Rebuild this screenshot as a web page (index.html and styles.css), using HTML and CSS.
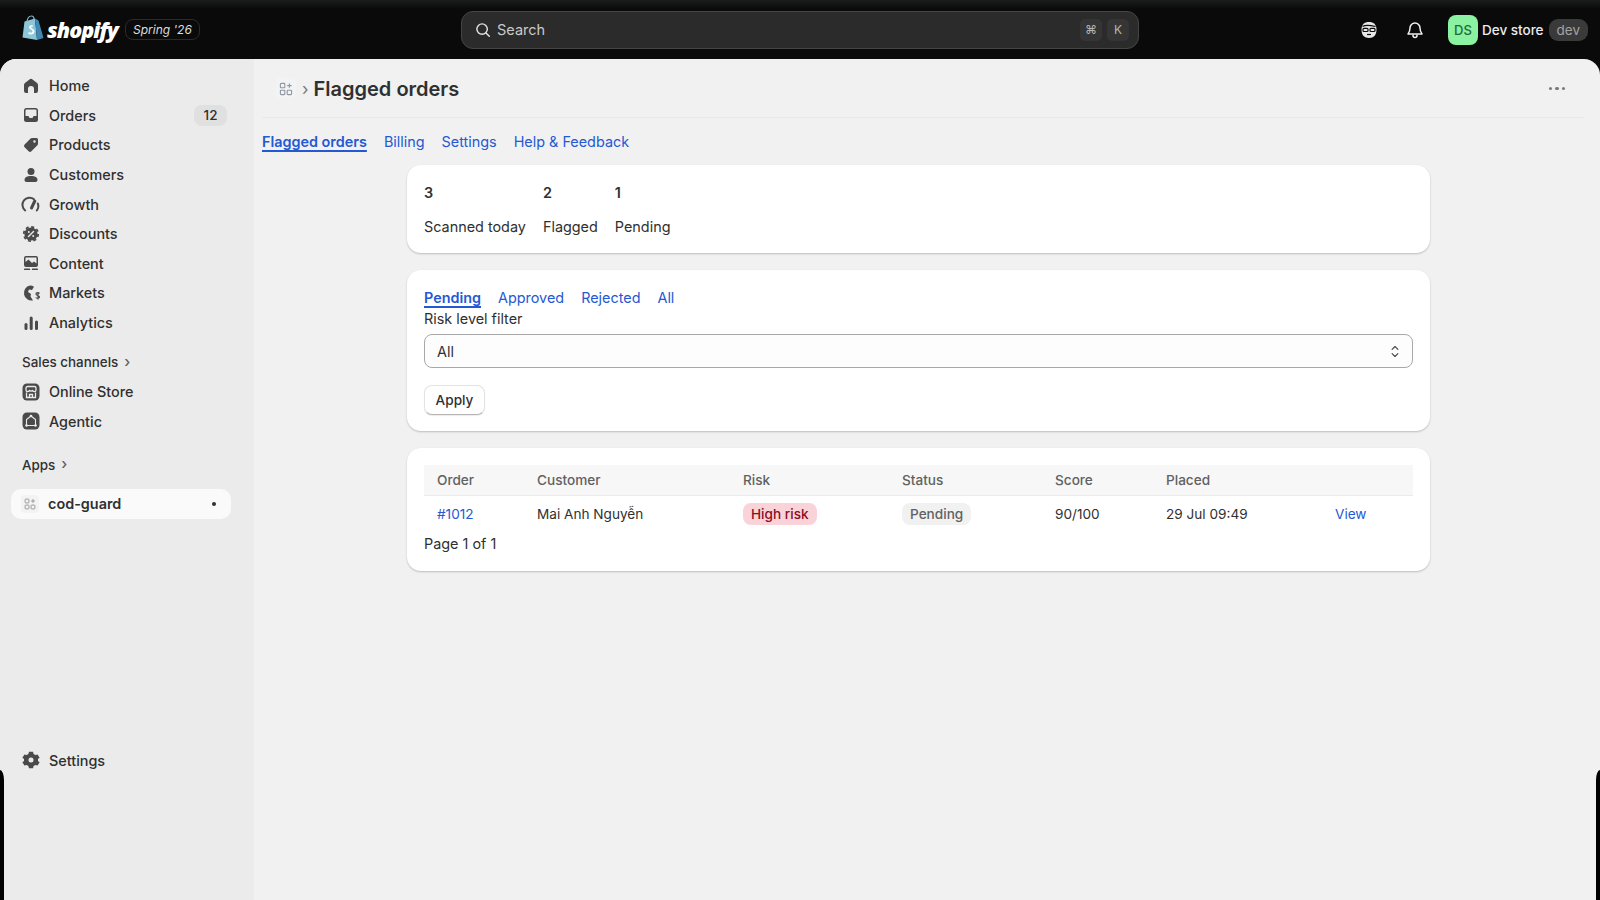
FILE: index.html
```html
<!DOCTYPE html>
<html>
<head>
    <title>Flagged orders</title>
    <link rel="stylesheet" href="styles.css">
</head>
<body>
    <header class="topbar">
        <div class="brand">
            <svg class="bag" viewBox="0 0 22 26" width="22" height="26">
                <path d="M2.5 6.5 L13 3.5 L15 25 L0.5 22.5 Z" fill="#8dc6d8"/>
                <path d="M13 3.5 L16.5 5.5 L21.5 23 L15 25 Z" fill="#3f8ab5"/>
                <path d="M5 6.5C5.5 3 7.5 1 9.5 1s2.5 1.500 2.500 3.500" fill="none" stroke="#7fb6cc" stroke-width="1.200"/>
                <path d="M10.800 10.500c-1-.5-3.600-.4-3.700 1.700-.1 2 3.600 2.300 3.400 4.300-.1 1.300-1.900 1.500-3.700.6l-.5 1.800c2.600 1 5.900.6 6.200-2.300.2-2.700-3.500-3-3.400-4.400 0-.6 1-.8 2-.4z" fill="#fff"/>
            </svg>
            <span class="wordmark">shopify</span>
            <span class="edition">Spring '26</span>
        </div>
        <div class="search">
            <svg viewBox="0 0 20 20" width="18" height="18" fill="none" stroke="#e3e3e3" stroke-width="1.600" stroke-linecap="round">
                <circle cx="9" cy="9" r="5.800"/>
                <path d="M13.300 13.300 L17 17"/>
            </svg>
            <span class="search-text">Search</span>
            <kbd>⌘</kbd>
            <kbd>K</kbd>
        </div>
        <div class="top-right">
            <svg class="top-icon" viewBox="0 0 20 20" width="20" height="20">
                <path d="M10 2c4.600 0 7.500 2.400 7.500 7.500 0 5.800-2.900 8.500-7.500 8.500s-7.500-2.700-7.500-8.500C2.500 4.400 5.400 2 10 2z" fill="#e8e8e8"/>
                <path d="M3.500 6.500c3-2 9-1 13 0" fill="none" stroke="#0b0b0b" stroke-width="1.200"/>
                <rect x="4" y="8.300" width="5" height="3.200" rx="1" fill="none" stroke="#0b0b0b" stroke-width="1.200"/>
                <rect x="11" y="8.300" width="5" height="3.200" rx="1" fill="none" stroke="#0b0b0b" stroke-width="1.200"/>
                <path d="M8 14.500h4" stroke="#0b0b0b" stroke-width="1.200"/>
            </svg>
            <svg class="top-icon bell" viewBox="0 0 20 20" width="20" height="20" fill="none" stroke="#f0f0f0" stroke-width="1.500" stroke-linejoin="round">
                <path d="M10 3a5 5 0 0 0-5 5c0 3-.8 4.500-2 6h14c-1.200-1.500-2-3-2-6a5 5 0 0 0-5-5z"/>
                <path d="M8 14.500v1a2 2 0 0 0 4 0v-1"/>
            </svg>
            <span class="avatar">DS</span>
            <span class="store-name">Dev store</span>
            <span class="dev-pill">dev</span>
        </div>
    </header>

    <div class="frame">
        <nav class="sidebar">
            <a class="nav-item">
                <svg class="icon" viewBox="0 0 20 20"><path d="M8.800 3.200a2 2 0 0 1 2.400 0l4.900 3.900c.6.500.9 1.200.9 1.900V15a2 2 0 0 1-2 2H13v-4a3 3 0 0 0-6 0v4H5a2 2 0 0 1-2-2V9c0-.7.300-1.400.9-1.900z"/></svg>
                <span>Home</span>
            </a>
            <a class="nav-item">
                <svg class="icon" viewBox="0 0 20 20"><path fill-rule="evenodd" d="M5.500 3h9A2.500 2.500 0 0 1 17 5.500v9a2.500 2.500 0 0 1-2.500 2.500h-9A2.500 2.500 0 0 1 3 14.500v-9A2.500 2.500 0 0 1 5.500 3zM4.500 5.500V11h3l1 2h3l1-2h3V5.500a1 1 0 0 0-1-1h-9a1 1 0 0 0-1 1z"/></svg>
                <span>Orders</span>
                <span class="count">12</span>
            </a>
            <a class="nav-item">
                <svg class="icon" viewBox="0 0 20 20"><path fill-rule="evenodd" d="M11.200 3h4.300A1.500 1.500 0 0 1 17 4.500v4.300a2 2 0 0 1-.6 1.400l-6 6a2 2 0 0 1-2.800 0l-4-4a2 2 0 0 1 0-2.800l6-6a2 2 0 0 1 1.600-.4zM13.500 5.300a1.200 1.200 0 1 0 0 2.400 1.200 1.200 0 0 0 0-2.400z"/></svg>
                <span>Products</span>
            </a>
            <a class="nav-item">
                <svg class="icon" viewBox="0 0 20 20"><circle cx="10" cy="6.500" r="3.500"/><path d="M3.500 14.800c0-2.400 2.600-3.800 6.500-3.800s6.500 1.400 6.500 3.800V15a2 2 0 0 1-2 2h-9a2 2 0 0 1-2-2z"/></svg>
                <span>Customers</span>
            </a>
            <a class="nav-item">
                <svg class="icon line" viewBox="0 0 20 20"><path d="M4.200 16.500A7 7 0 0 1 13 5.200"/><path d="M16.800 9.500a7 7 0 0 1-1 7"/><path d="M13.800 7 10.500 14" stroke-width="3"/></svg>
                <span>Growth</span>
            </a>
            <a class="nav-item">
                <svg class="icon" viewBox="0 0 20 20">
                    <circle cx="10" cy="10" r="6.600"/>
                    <circle cx="10" cy="10" r="7.200" fill="none" stroke="#4a4a4a" stroke-width="1.800" stroke-dasharray="3 2.650"/>
                    <path d="M12.500 7.500 7.500 12.500" stroke="#ebebeb" stroke-width="1.500" stroke-linecap="round"/>
                    <circle cx="7.800" cy="8" r="1" fill="#ebebeb"/>
                    <circle cx="12.200" cy="12" r="1" fill="#ebebeb"/>
                </svg>
                <span>Discounts</span>
            </a>
            <a class="nav-item">
                <svg class="icon" viewBox="0 0 20 20">
                    <path fill-rule="evenodd" d="M5 3h10a2 2 0 0 1 2 2v7a2 2 0 0 1-2 2H5a2 2 0 0 1-2-2V5a2 2 0 0 1 2-2zM4.500 5v4l3-2.500 3.500 3.500 2-1.500 2.500 2V5a.5.500 0 0 0-.5-.5H5a.5.500 0 0 0-.5.500z"/>
                    <rect x="3" y="15.600" width="6.200" height="1.500" rx=".7"/>
                    <rect x="10.800" y="15.600" width="6.200" height="1.500" rx=".7"/>
                </svg>
                <span>Content</span>
            </a>
            <a class="nav-item">
                <svg class="icon" viewBox="0 0 20 20">
                    <path d="M9 2.500a7.500 7.500 0 0 1 4 1.200L11 7 8 6.500 7 9l3 2-.5 2.500L12 17.400a7.500 7.500 0 1 1-3-14.900z"/>
                    <path d="M18.500 10.500c-.5-1-3.500-1.300-3.500.5 0 2 3.500 1 3.500 3 0 1.700-3 1.500-3.800.5M17 9v7.500" fill="none" stroke="#4a4a4a" stroke-width="1.200"/>
                </svg>
                <span>Markets</span>
            </a>
            <a class="nav-item">
                <svg class="icon" viewBox="0 0 20 20"><rect x="3.500" y="10" width="3" height="7" rx="1.500"/><rect x="8.700" y="3.500" width="3" height="13.500" rx="1.500"/><rect x="14" y="7.500" width="3" height="9.500" rx="1.500"/></svg>
                <span>Analytics</span>
            </a>

            <div class="nav-label">Sales channels <span class="chev">›</span></div>
            <a class="nav-item">
                <svg class="icon" viewBox="0 0 20 20">
                    <rect x="1.500" y="1.500" width="17" height="17" rx="4.500"/>
                    <path d="M5 8V6a1.500 1.500 0 0 1 1.500-1.500h7A1.500 1.500 0 0 1 15 6v2a1.700 1.700 0 0 1-3.400 0 1.700 1.700 0 0 1-3.200 0A1.700 1.700 0 0 1 5 8zM5.500 10.500V15.500h9v-5M8.500 15.500v-3h3v3" fill="none" stroke="#ebebeb" stroke-width="1.300"/>
                </svg>
                <span>Online Store</span>
            </a>
            <a class="nav-item">
                <svg class="icon" viewBox="0 0 20 20">
                    <rect x="1.500" y="1.500" width="17" height="17" rx="4.500"/>
                    <path d="M10 5 14.500 8.500 14.500 14.500 5.500 14.500 5.500 8.500Z" fill="none" stroke="#ebebeb" stroke-width="1.100"/>
                    <circle cx="10" cy="5" r="1.300" fill="#ebebeb"/>
                    <circle cx="5.500" cy="14.500" r="1.300" fill="#ebebeb"/>
                    <circle cx="14.500" cy="14.500" r="1.300" fill="#ebebeb"/>
                </svg>
                <span>Agentic</span>
            </a>

            <div class="nav-label apps">Apps <span class="chev">›</span></div>
            <a class="nav-item current">
                <span class="app-tile">
                    <svg viewBox="0 0 20 20" width="14" height="14" fill="none" stroke="#9b9b9b" stroke-width="1.400"><rect x="3" y="3" width="5.500" height="5.500" rx="1"/><rect x="3" y="11.500" width="5.500" height="5.500" rx="1"/><rect x="11.500" y="11.500" width="5.500" height="5.500" rx="1"/><path d="M14.250 3v5.500M11.500 5.750h5.500"/></svg>
                </span>
                <span>cod-guard</span>
                <i class="dot"></i>
            </a>

            <a class="nav-item settings">
                <svg class="icon" viewBox="0 0 20 20">
                    <path fill-rule="evenodd" d="M8 2.800h4l.6 2.200 1.800 1 2.200-.6 2 3.400-1.600 1.200v2l1.600 1.200-2 3.400-2.200-.6-1.800 1-.6 2.200H8l-.6-2.200-1.800-1-2.200.6-2-3.400L3 12v-2L1.400 8.800l2-3.400 2.200.6 1.800-1zM10 8.500a2.500 2.500 0 1 0 0 5 2.500 2.500 0 0 0 0-5z" transform="translate(0 -1)"/>
                </svg>
                <span>Settings</span>
            </a>
        </nav>

        <main class="content">
            <div class="page-head">
                <span class="app-tile head-tile">
                    <svg viewBox="0 0 20 20" width="16" height="16" fill="none" stroke="#8f979f" stroke-width="1.400"><rect x="3" y="3" width="5.500" height="5.500" rx="1"/><rect x="3" y="11.500" width="5.500" height="5.500" rx="1"/><rect x="11.500" y="11.500" width="5.500" height="5.500" rx="1"/><path d="M14.250 3v5.500M11.500 5.750h5.500"/></svg>
                </span>
                <span class="crumb-sep">›</span>
                <h1>Flagged orders</h1>
                <span class="more"><i></i><i></i><i></i></span>
            </div>
            <div class="tabs page-tabs">
                <a class="active">Flagged orders</a>
                <a>Billing</a>
                <a>Settings</a>
                <a>Help &amp; Feedback</a>
            </div>

            <div class="cards">
                <section class="card stats">
                    <div class="stat"><strong>3</strong><span>Scanned today</span></div>
                    <div class="stat"><strong>2</strong><span>Flagged</span></div>
                    <div class="stat"><strong>1</strong><span>Pending</span></div>
                </section>

                <section class="card filters">
                    <div class="tabs">
                        <a class="active">Pending</a>
                        <a>Approved</a>
                        <a>Rejected</a>
                        <a>All</a>
                    </div>
                    <label class="field-label">Risk level filter</label>
                    <div class="select">
                        <span>All</span>
                        <svg viewBox="0 0 12 18" width="10" height="15" fill="none" stroke="#4a4a4a" stroke-width="1.400" stroke-linecap="round" stroke-linejoin="round"><path d="M2.500 6.500 6 3l3.500 3.500M2.500 11.500 6 15l3.500-3.500"/></svg>
                    </div>
                    <button class="btn">Apply</button>
                </section>

                <section class="card orders">
                    <table>
                        <thead>
                            <tr>
                                <th>Order</th>
                                <th>Customer</th>
                                <th>Risk</th>
                                <th>Status</th>
                                <th>Score</th>
                                <th>Placed</th>
                                <th></th>
                            </tr>
                        </thead>
                        <tbody>
                            <tr>
                                <td><a>#1012</a></td>
                                <td>Mai Anh Nguyễn</td>
                                <td><span class="badge high">High risk</span></td>
                                <td><span class="badge">Pending</span></td>
                                <td>90/100</td>
                                <td>29 Jul 09:49</td>
                                <td><a>View</a></td>
                            </tr>
                        </tbody>
                    </table>
                    <p class="pager">Page 1 of 1</p>
                </section>
            </div>
        </main>
    </div>

    <div class="edge left"></div>
    <div class="edge right"></div>
</body>
</html>
```

FILE: styles.css
```css
* { box-sizing: border-box; }
body { margin: 0; height: 900px; overflow: hidden; position: relative; background: #0a0a0a; color: #303030; font-family: Inter, 'Noto Sans', sans-serif; font-size: 14px; }
a { color: #2459d3; }
i { display: block; }

/* top bar */
.topbar { height: 59px; display: grid; grid-template-columns: 461px 678px 1fr; align-items: center; background: linear-gradient(#1b1c1c, #0a0a0a 9px); color: #e3e3e3; }
.brand { display: flex; align-items: center; padding-left: 22px; }
.bag { margin-top: -3px; }
.wordmark { margin-left: 3px; width: 71px; color: #fff; font-family: 'Open Sans', sans-serif; font-size: 21.5px; font-weight: 800; font-style: italic; letter-spacing: -1px; }
.edition { margin-left: 7px; height: 21px; padding: 0 7px; display: flex; align-items: center; border: 1px solid #2b2b2b; border-radius: 8px; font-size: 12px; font-style: italic; color: #dedede; }
.search { height: 38px; display: flex; align-items: center; gap: 5px; padding: 0 9px 0 12px; background: #2b2b2b; border: 1px solid #454545; border-radius: 12px; }
.search-text { flex: 1; color: #c9c9c9; font-size: 14.500px; }
kbd { width: 22px; height: 22px; display: flex; align-items: center; justify-content: center; background: #353535; border-radius: 5px; color: #b5b5b5; font-family: Inter, sans-serif; font-size: 12px; }
.top-right { display: flex; align-items: center; padding-left: 220px; }
.top-icon { flex: none; }
.bell { margin-left: 26px; }
.avatar { margin-left: 23px; width: 30px; height: 30px; display: flex; align-items: center; justify-content: center; background: #8af2a1; border-radius: 8px; color: #1f6b3c; font-size: 13px; font-weight: 500; }
.store-name { margin-left: 4px; font-size: 13.500px; font-weight: 500; color: #ececec; }
.dev-pill { margin-left: 5px; padding: 0 8px; height: 22px; display: flex; align-items: center; background: #3a3a3a; border-radius: 9px; color: #a3a3a3; font-size: 13.500px; }

/* frame */
.frame { height: 841px; display: flex; background: #f1f1f1; border-radius: 16px 16px 0 0; overflow: hidden; }
.edge { position: absolute; top: 770px; bottom: 0; width: 4px; background: #000; }
.edge.left { left: 0; border-top-right-radius: 4px 10px; }
.edge.right { right: 0; border-top-left-radius: 4px 10px; }

/* sidebar */
.sidebar { width: 254px; flex: none; display: flex; flex-direction: column; padding: 12px 23px 125px 11px; background: #ebebeb; }
.nav-item { height: 29.600px; display: flex; align-items: center; padding: 0 4px 0 10px; color: #303030; font-size: 14.400px; font-weight: 500; }
.icon { width: 20px; height: 20px; margin-right: 8px; flex: none; fill: #4a4a4a; }
.icon.line { fill: none; stroke: #4a4a4a; stroke-width: 2; stroke-linecap: round; }
.count { margin-left: auto; padding: 0 8px; height: 21px; min-width: 33px; display: flex; align-items: center; justify-content: center; background: #e0e0e0; border-radius: 8px; font-size: 13.500px; }
.nav-label { height: 29.600px; margin-top: 10px; display: flex; align-items: center; gap: 6px; padding-left: 11px; color: #303030; font-size: 13.400px; font-weight: 500; }
.nav-label.apps { margin-top: 14px; }
.chev { color: #616161; font-size: 15px; line-height: 1; margin-top: -2px; }
.nav-item.current { height: 30px; margin-top: 9px; background: #fafafa; border-radius: 10px; font-weight: 600; }
.app-tile { width: 18px; height: 18px; margin-right: 9px; display: flex; align-items: center; justify-content: center; flex: none; background: #f3f3f3; border-radius: 4px; }
.dot { margin-left: auto; margin-right: 11px; width: 4px; height: 4px; border-radius: 50%; background: #303030; }
.settings { margin-top: auto; }

/* main */
.content { flex: 1; min-width: 0; padding-left: 8px; }
.page-head { height: 59px; display: flex; align-items: center; margin-right: 16px; padding: 1px 0 0 13px; border-bottom: 1px solid #e9e9e9; }
.head-tile { width: 21px; height: 21px; margin: 0; background: #f1f3f5; border-radius: 5px; }
.crumb-sep { margin: 0 5px 0 6px; color: #777; font-size: 17px; }
h1 { margin: 0; flex: 1; font-size: 20px; font-weight: 600; color: #303030; }
.more { display: flex; gap: 3px; margin-right: 19px; }
.more i { width: 3.500px; height: 3.500px; border-radius: 50%; background: #7a7a7a; }
.tabs { display: flex; gap: 17px; font-size: 14.400px; }
.tabs a.active { font-weight: 600; text-decoration: underline; text-underline-offset: 3px; text-decoration-thickness: 1.500px; }
.page-tabs { height: 47px; align-items: center; }

.cards { width: 1023px; margin-left: 145px; display: flex; flex-direction: column; gap: 17px; }
.card { padding: 17px; background: #fff; border-radius: 14px; box-shadow: 0 1px 2px rgba(0, 0, 0, .22); }

.stats { height: 88px; display: flex; gap: 17px; }
.stat { display: flex; flex-direction: column; gap: 17px; font-size: 14.400px; line-height: 17px; padding-top: 2px; }
.stat strong { font-weight: 600; }

.filters { height: 161px; padding-top: 19px; }
.field-label { display: block; margin-top: 4px; font-size: 14.400px; line-height: 18px; }
.select { height: 34px; margin-top: 6px; padding: 0 12px; display: flex; align-items: center; justify-content: space-between; background: #fdfdfd; border: 1px solid #a8a8a8; border-radius: 8px; font-size: 14.400px; }
.btn { display: block; margin-top: 17px; width: 61px; height: 30px; padding: 0; background: #fff; border: 1px solid #e3e3e3; border-bottom-color: #b5b5b5; border-radius: 8px; color: #303030; font-family: inherit; font-size: 13.600px; font-weight: 500; box-shadow: 0 1px 1px rgba(0, 0, 0, .08); }

.orders { height: 123px; }
table { width: 100%; border-collapse: collapse; table-layout: fixed; font-size: 13.600px; }
th { height: 30px; padding: 0 13px; background: #f7f7f7; border-bottom: 1px solid #ebebeb; color: #616161; font-weight: 500; text-align: left; }
td { height: 38px; padding: 0 13px; }
th:nth-child(1) { width: 100px; }
th:nth-child(2) { width: 206px; }
th:nth-child(3) { width: 159px; }
th:nth-child(4) { width: 153px; }
th:nth-child(5) { width: 111px; }
th:nth-child(6) { width: 169px; }
.badge { display: inline-block; padding: 0 8px; line-height: 22px; background: #f1f1f1; border-radius: 8px; color: #616161; font-weight: 500; }
.badge.high { background: #f9d3d8; color: #8e0b21; }
.pager { margin: 1px 0 0; font-size: 14.400px; line-height: 20px; }
```
